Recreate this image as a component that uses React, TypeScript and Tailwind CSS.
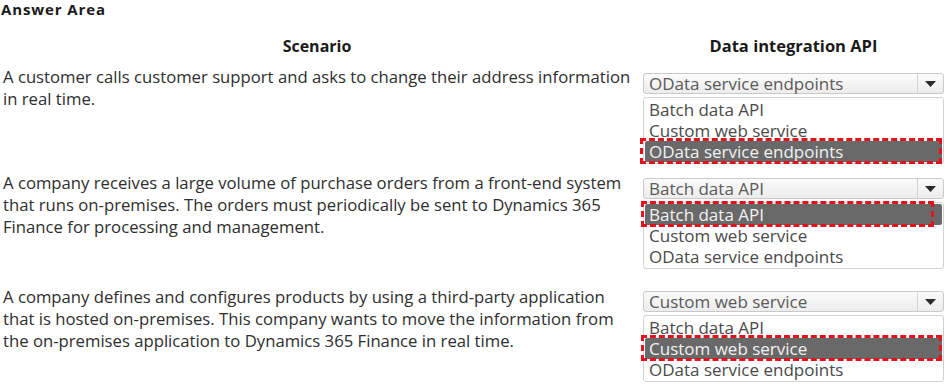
import React from "react";

type DD = {
  value: string;
  selected: number;
  redLeft: number;
  redRight: number;
};

const OPTIONS = ["Batch data API", "Custom web service", "OData service endpoints"];

function Dropdown({ value, selected, redLeft, redRight }: DD) {
  return (
    <div className="flex flex-col w-[301px]">
      <div className="flex h-[21px] items-stretch rounded-[3px] border border-[#c9c9c9] bg-gradient-to-b from-[#fbfbfb] to-[#ececec]">
        <div className="flex-1 pl-[5px] text-[17px] leading-[19px] text-[#5a5a5a]">{value}</div>
        <div className="flex w-[26px] items-center justify-center border-l border-[#d4d4d4]">
          <svg width="11" height="6" viewBox="0 0 11 6">
            <path d="M0 0 L11 0 L5.5 6 Z" fill="#2b2b2b" />
          </svg>
        </div>
      </div>
      <div className="relative mt-[3px] rounded-[3px] border border-[#d2d2d2] bg-white px-[1px] py-[1px]">
        {OPTIONS.map((o, i) => (
          <div
            key={o}
            className={
              i === selected
                ? "h-[21px] rounded-[2px] bg-[#696969] pl-[4px] text-[17px] leading-[21px] text-[#f2f2f2]"
                : "h-[21px] pl-[4px] text-[17px] leading-[21px] text-[#4a4a4a]"
            }
          >
            {o}
          </div>
        ))}
        <div
          className="pointer-events-none absolute h-[26px] border-[3px] border-dashed border-[#e3121b]"
          style={{ top: selected * 21 - 2, left: redLeft, width: redRight - redLeft }}
        />
      </div>
    </div>
  );
}

function Row({
  lines,
  dd,
  h,
  selTop,
}: {
  lines: string[];
  dd: DD;
  h: string;
  selTop: string;
}) {
  return (
    <div className={`flex ${h}`}>
      <div className="w-[643px] pl-[3px] text-[16.7px] leading-[22px] text-[#2e2e2e] whitespace-nowrap">
        {lines.map((l) => (
          <div key={l}>{l}</div>
        ))}
      </div>
      <div className={selTop}>
        <Dropdown {...dd} />
      </div>
    </div>
  );
}

export default function App() {
  return (
    <div
      className="w-[948px] h-[384px] overflow-hidden bg-white"
      style={{ fontFamily: '"Open Sans", "Noto Sans", Arial, sans-serif' }}
    >
      <div className="pl-[1px] pt-[1px] text-[15px] font-bold leading-[17px] tracking-[0.9px] text-[#1a1a1a]">
        Answer Area
      </div>
      <div className="mt-[18px] flex h-[20px] text-[16px] font-bold leading-[20px] text-[#1a1a1a]">
        <div className="w-[634px] text-center">Scenario</div>
        <div className="ml-[9px] w-[301px] text-center text-[16.5px]">Data integration API</div>
      </div>
      <div className="mt-[10px]">
        <Row
          h="h-[106px]"
          selTop="pt-[7px]"
          lines={[
            "A customer calls customer support and asks to change their address information",
            "in real time.",
          ]}
          dd={{ value: "OData service endpoints", selected: 2, redLeft: -4, redRight: 298 }}
        />
        <Row
          h="h-[114px]"
          selTop="pt-[6px]"
          lines={[
            "A company receives a large volume of purchase orders from a front-end system",
            "that runs on-premises. The orders must periodically be sent to Dynamics 365",
            "Finance for processing and management.",
          ]}
          dd={{ value: "Batch data API", selected: 0, redLeft: -3, redRight: 290 }}
        />
        <Row
          h="h-[98px]"
          selTop="pt-[5px]"
          lines={[
            "A company defines and configures products by using a third-party application",
            "that is hosted on-premises. This company wants to move the information from",
            "the on-premises application to Dynamics 365 Finance in real time.",
          ]}
          dd={{ value: "Custom web service", selected: 1, redLeft: -3, redRight: 298 }}
        />
      </div>
    </div>
  );
}
